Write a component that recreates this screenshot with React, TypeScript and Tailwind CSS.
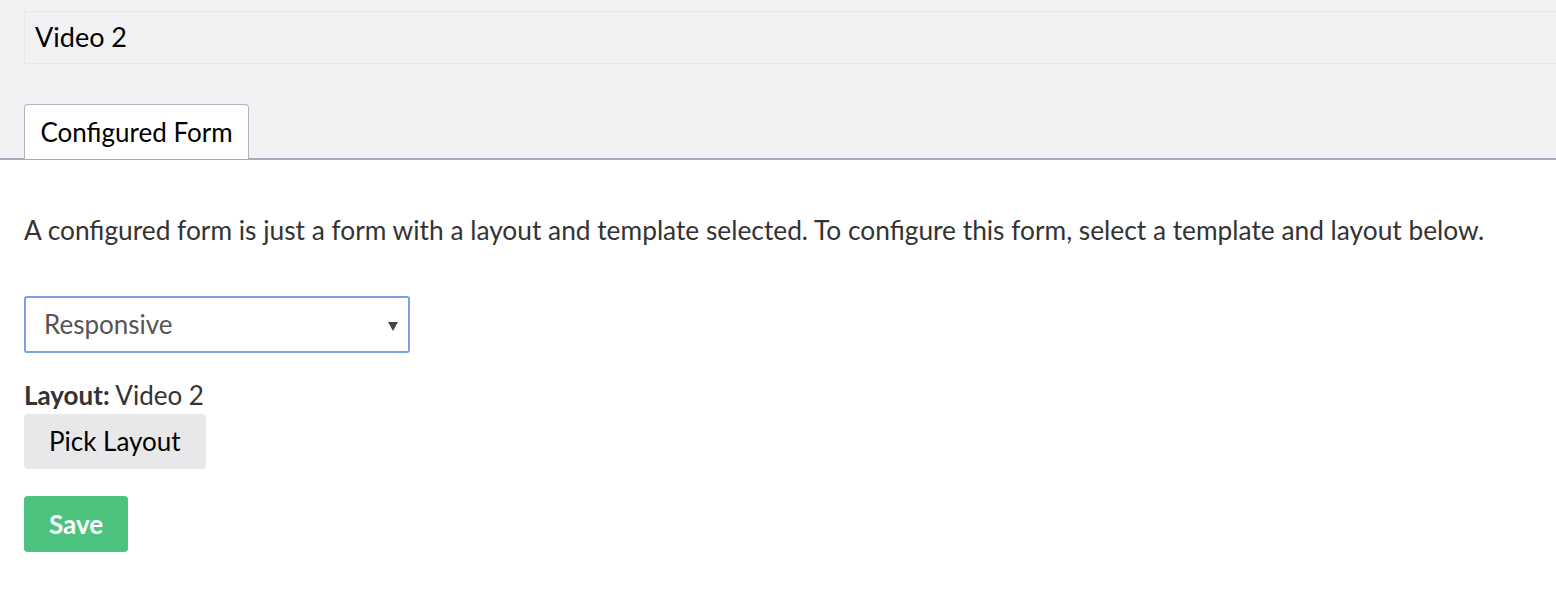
export default function App() {
  return (
    <div className="min-h-[600px] bg-white text-[#333] font-['Lato','Noto_Sans',sans-serif] text-[26px]">
      <div className="bg-[#f2f2f4] pt-[11px] pl-[24px]">
        <div className="h-[53px] border border-r-0 border-[#e9e9eb] pl-[10px] flex items-center text-black text-[27px]">
          Video 2
        </div>
        <div className="mt-[40px] flex">
          <div className="h-[55px] w-[225px] bg-white border border-b-0 border-[#b3b1c1] rounded-t-[4px] flex items-center justify-center text-black mb-[-1px]">
            Configured Form
          </div>
        </div>
      </div>
      <div className="border-t-2 border-[#aba9b9]"></div>
      <div className="px-[24px] pt-[52px]">
        <p className="leading-[36px] text-[26.3px]">
          A configured form is just a form with a layout and template selected. To configure this form, select a template and layout below.
        </p>
        <div className="mt-[48px] w-[386px] h-[57px] border-2 border-[#7aa1e3] rounded-[3px] flex items-center justify-between pl-[18px] pr-[10px] text-[#555]">
          <span>Responsive</span>
          <svg width="10" height="10" viewBox="0 0 10 10" className="mt-[2px]">
            <polygon points="0,1 10,1 5,10" fill="#444" />
          </svg>
        </div>
        <div className="mt-[26px] leading-[32px]">
          <span className="font-bold">Layout:</span> Video 2
        </div>
        <button className="mt-[3px] h-[55px] px-[25px] bg-[#e8e8ea] rounded-[4px] text-black">Pick Layout</button>
        <div className="mt-[27px]">
          <button className="h-[56px] w-[104px] bg-[#4cc47f] rounded-[4px] text-white font-bold">Save</button>
        </div>
      </div>
    </div>
  );
}
